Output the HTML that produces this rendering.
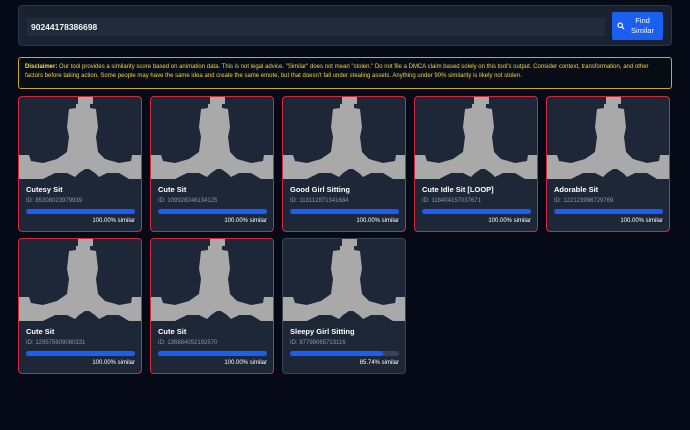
<!DOCTYPE html>
<html><head><meta charset="utf-8"><style>
*{box-sizing:border-box;margin:0;padding:0}
body{width:690px;height:430px;background:#050a16;font-family:"Liberation Sans",sans-serif;position:relative;overflow:hidden}
.top{position:absolute;left:18px;top:5px;width:654px;height:41px;background:#182233;border:1px solid #2a3447;border-radius:4px}
.inp{position:absolute;left:8px;top:12px;width:578px;height:18px;background:#212b3c;border-radius:2px;color:#f2f4f8;font-size:8.5px;line-height:18px;padding-left:4px;font-weight:bold}
.btn{position:absolute;left:593px;top:6px;width:51px;height:28px;background:#1a5ff0;border-radius:2px;color:#fff;font-size:7.5px;line-height:10px;text-align:center;padding-left:10px;padding-top:4px}
.btn svg{position:absolute;left:5px;top:10px}
.disc{position:absolute;left:18px;top:57px;width:654px;height:32px;border:1px solid #c9a92a;border-radius:3px;background:#080c14;color:#f0d24a;font-size:6px;line-height:9px;padding:5px 6px}
.disc b{color:#f7dc55}
.card{position:absolute;width:124px;height:136px;background:#1e2738;border:1px solid #d3283a;border-radius:4px;overflow:hidden}
.card.g{border-color:#3a4354}
.card svg.fig{position:absolute;left:0;top:0}
.t{position:absolute;left:7px;top:88px;color:#fff;font-weight:bold;font-size:7.5px}
.id{position:absolute;left:7px;top:101px;color:#8c96a6;font-size:6px}
.bar{position:absolute;left:7px;top:112px;width:109px;height:5px;background:#3a4354;border-radius:3px}
.bar i{display:block;height:5px;background:#1a5ff0;border-radius:3px}
.p{position:absolute;right:6px;top:121px;color:#fff;font-size:6px}
</style></head><body>
<div class="top"><div class="inp">90244178386698</div>
<div class="btn"><svg width="8" height="8" viewBox="0 0 8 8"><circle cx="3.2" cy="3.2" r="2.2" fill="none" stroke="#fff" stroke-width="1.2"/><line x1="4.8" y1="4.8" x2="7" y2="7" stroke="#fff" stroke-width="1.3"/></svg>Find<br>Similar</div></div>
<div class="disc"><b>Disclaimer:</b> Our tool provides a similarity score based on animation data. This is not legal advice. "Similar" does not mean "stolen." Do not file a DMCA claim based solely on this tool's output. Consider context, transformation, and other factors before taking action. Some people may have the same idea and create the same emote, but that doesn't fall under stealing assets. Anything under 90% similarity is likely not stolen.</div>

<svg width="0" height="0" style="position:absolute"><defs><polygon id="f" fill="#a9a9a9" points="59,0 74,0 74,7 71,7 71,11 77,12 79,30 77,40 79,55 86,62 100,66 112,64 113,58 123,58 123,82 110,82 100,76 88,76 80,80 76,76 70,72 66,72 60,76 56,80 48,76 36,76 24,82 0,82 0,58 10,58 12,64 24,66 38,62 48,55 50,40 48,30 50,12 57,11 57,7 59,7"/></defs></svg>

<div class="card" style="left:18px;top:96px"><svg class="fig" width="124" height="84"><use href="#f"/></svg><div class="t">Cutesy Sit</div><div class="id">ID: 85308023979939</div><div class="bar"><i style="width:100%"></i></div><div class="p">100.00% similar</div></div>
<div class="card" style="left:150px;top:96px"><svg class="fig" width="124" height="84"><use href="#f"/></svg><div class="t">Cute Sit</div><div class="id">ID: 109928246134125</div><div class="bar"><i style="width:100%"></i></div><div class="p">100.00% similar</div></div>
<div class="card" style="left:282px;top:96px"><svg class="fig" width="124" height="84"><use href="#f"/></svg><div class="t">Good Girl Sitting</div><div class="id">ID: 113112871341684</div><div class="bar"><i style="width:100%"></i></div><div class="p">100.00% similar</div></div>
<div class="card" style="left:414px;top:96px"><svg class="fig" width="124" height="84"><use href="#f"/></svg><div class="t">Cute Idle Sit [LOOP]</div><div class="id">ID: 118404157037671</div><div class="bar"><i style="width:100%"></i></div><div class="p">100.00% similar</div></div>
<div class="card" style="left:546px;top:96px"><svg class="fig" width="124" height="84"><use href="#f"/></svg><div class="t">Adorable Sit</div><div class="id">ID: 122123996729769</div><div class="bar"><i style="width:100%"></i></div><div class="p">100.00% similar</div></div>
<div class="card" style="left:18px;top:238px"><svg class="fig" width="124" height="84"><use href="#f"/></svg><div class="t">Cute Sit</div><div class="id">ID: 129575609080331</div><div class="bar"><i style="width:100%"></i></div><div class="p">100.00% similar</div></div>
<div class="card" style="left:150px;top:238px"><svg class="fig" width="124" height="84"><use href="#f"/></svg><div class="t">Cute Sit</div><div class="id">ID: 136884052192570</div><div class="bar"><i style="width:100%"></i></div><div class="p">100.00% similar</div></div>
<div class="card g" style="left:282px;top:238px"><svg class="fig" width="124" height="84"><use href="#f"/></svg><div class="t">Sleepy Girl Sitting</div><div class="id">ID: 87798065713116</div><div class="bar"><i style="width:85.74%"></i></div><div class="p">85.74% similar</div></div>
</body></html>
